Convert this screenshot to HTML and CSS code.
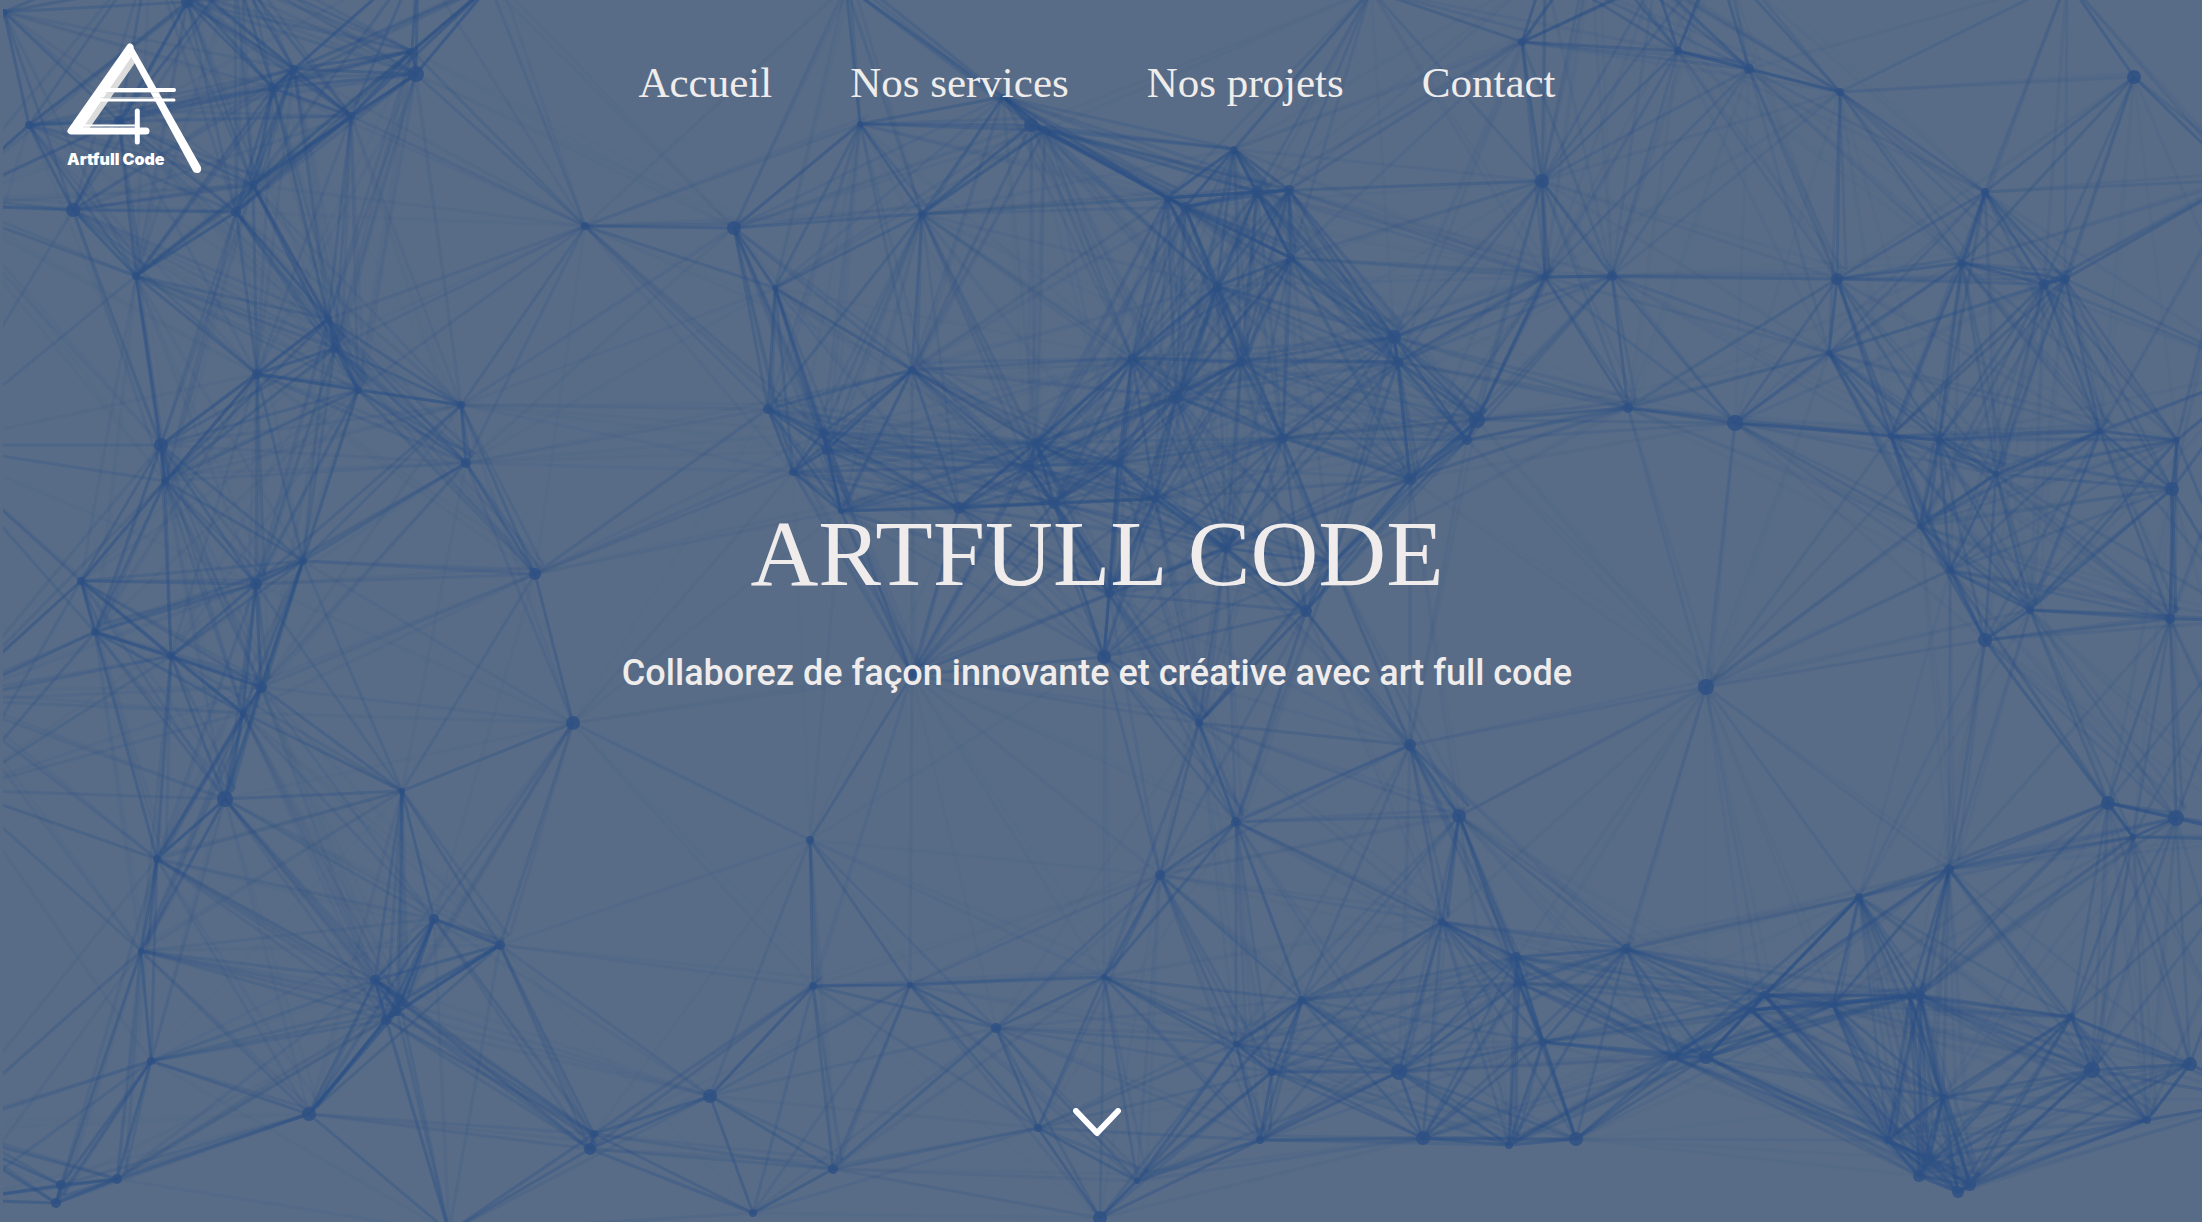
FILE: index.html
```html
<!DOCTYPE html>
<html lang="fr">
<head>
<meta charset="utf-8">
<meta name="viewport" content="width=device-width, initial-scale=1">
<title>Artfull Code</title>
<link rel="stylesheet" href="styles.css">
</head>
<body>
<div class="hero">
  <svg class="network" viewBox="0 0 2202 1222" preserveAspectRatio="xMidYMid slice" aria-hidden="true"></svg>
  <header class="header">
    <a class="logo" href="#" aria-label="Artfull Code">
      <svg class="logo-mark" viewBox="0 0 136 132">
        <path d="M65 9 L71 17 L23 86 L13 86 Z" fill="#dcdcdc"/>
        <path d="M64 4 L5 88 H80" fill="none" stroke="#fff" stroke-width="7" stroke-linecap="round" stroke-linejoin="round"/>
        <path d="M10 85 L61 9 L66 13 L16 86 Z" fill="#fff"/>
        <path d="M61 4 Q64 -1 67 4 L135 124 Q136 130 131 130 Q128 130 127 128 L61 6 Z" fill="#fff"/>
        <path d="M39 47 H108" stroke="#fff" stroke-width="4" stroke-linecap="round"/>
        <path d="M34 57 H108" stroke="#fff" stroke-width="3" stroke-linecap="round"/>
        <path d="M39 49.500 H94 M34 54.500 H96" stroke="#d6d9de" stroke-width="1" opacity=".5"/>
        <path d="M16 82.500 H70" stroke="#fff" stroke-width="2"/>
        <path d="M71.300 68 V99" stroke="#fff" stroke-width="5" stroke-linecap="round"/>
        <text class="logo-text" x="1" y="122">Artfull Code</text>
      </svg>
    </a>
    <nav class="nav" aria-label="Navigation principale">
      <a href="#accueil">Accueil</a>
      <a href="#services">Nos services</a>
      <a href="#projets">Nos projets</a>
      <a href="#contact">Contact</a>
    </nav>
  </header>
  <main class="intro">
    <h1 class="title">ARTFULL CODE</h1>
    <p class="tagline">Collaborez de façon innovante et créative avec art full code</p>
  </main>
  <div class="bottom">
    <a class="scroll" href="#services" aria-label="Défiler vers le bas">
      <svg class="chevron" viewBox="0 0 48 30"><path d="M3 3 L24 25 L45 3" fill="none" stroke="#fff" stroke-width="6" stroke-linecap="round" stroke-linejoin="round"/></svg>
    </a>
  </div>
</div>
<script src="network.js"></script>
</body>
</html>
```
FILE: styles.css
```css
* { box-sizing: border-box; }

body {
  margin: 0;
  background: #586c87;
  color: #efeceb;
  font-family: "Liberation Serif", serif;
}

a { color: inherit; text-decoration: none; }

.hero {
  position: relative;
  display: grid;
  grid-template-rows: 180px 1fr 180px;
  min-height: 100vh;
  padding-right: 8px;
  overflow: hidden;
}

.network {
  position: absolute;
  inset: 0;
  width: 100%;
  height: 100%;
  clip-path: inset(0 0 0 3px);
}

.network line { stroke: #2b5086; stroke-width: 3; }
.network circle { fill: #2f5184; fill-opacity: .85; }

.header, .intro, .bottom { position: relative; }

.header {
  display: grid;
  grid-template-columns: 1fr auto 1fr;
  align-items: start;
  padding: 43px 66px 0;
}

.logo { width: 136px; }
.logo-mark { display: block; width: 136px; height: 132px; overflow: visible; }
.logo-text { fill: #fff; font: 900 16px "Inter", sans-serif; }

.nav {
  display: flex;
  gap: 78px;
  padding-top: 16px;
  font-size: 43px;
  line-height: 48px;
}

.intro {
  display: flex;
  flex-direction: column;
  align-items: center;
  justify-content: center;
  gap: 44px;
  padding-bottom: 24px;
  text-align: center;
}

.title {
  margin: 0;
  font-size: 94px;
  font-weight: 400;
  line-height: 104px;
}

.tagline {
  margin: 0;
  font-family: "Roboto", sans-serif;
  font-size: 36px;
  font-weight: 500;
  line-height: 48px;
}

.bottom {
  display: flex;
  align-items: center;
  justify-content: center;
}

.scroll { padding-bottom: 18px; }
.chevron { display: block; width: 48px; height: 30px; }
```
FILE: network.js
```js
// Nodes of the background mesh: x, y, radius
const nodes = [
  [416,74,8],[412,51,3],[294,69,4],[273,88,5],[351,116,4],[187,2,6],[29,125,4],[119,121,5],
  [73,210,7],[253,185,4],[236,212,5],[136,276,4],[328,319,4],[335,348,5],[257,374,5],[358,390,4],
  [461,405,4],[466,463,5],[161,445,7],[165,481,4],[81,581,4],[256,584,6],[303,561,4],[535,574,6],
  [585,226,4],[734,228,7],[4,12,3],[235,-30,4],[418,-40,4],[490,-15,4],[150,-50,4],
  [860,124,3],[1003,97,3],[1031,125,7],[1045,130,4],[922,214,4],[1234,149,3],[1167,198,3],
  [1185,207,5],[1257,192,6],[1289,190,5],[1291,258,4],[1217,286,4],[1394,337,7],[1398,362,5],
  [1241,362,5],[1132,358,4],[1176,397,7],[1283,438,5],[1410,479,6],[1036,443,5],[1028,466,6],
  [1118,463,5],[1054,503,6],[1155,499,4],[912,370,4],[775,288,3],[768,409,5],[823,432,4],
  [827,450,5],[793,472,4],[841,511,3],[959,508,6],[1226,548,5],[1333,563,4],[1109,594,4],
  [1306,611,6],[846,-14,4],[1371,-10,4],
  [1477,420,8],[1467,440,5],[1522,42,4],[1678,51,4],[1749,69,5],[1840,92,4],[2134,77,7],
  [1542,181,7],[1545,277,3],[1612,276,5],[1837,279,6],[1985,192,4],[1962,263,4],[2044,284,5],
  [2065,279,5],[1829,353,3],[1628,408,5],[1735,423,8],[1891,436,3],[1939,440,4],[2100,431,3],
  [2177,440,3],[1996,474,3],[2172,489,7],[1920,526,3],[1950,570,4],[2030,610,4],
  [1545,-30,4],[1590,-55,4],[1655,-20,4],[1715,-45,4],[2067,-20,4],[2240,180,4],[2260,370,4],
  [95,632,4],[171,656,4],[261,687,6],[243,713,3],[225,799,8],[402,791,3],[157,859,4],
  [573,723,7],[141,951,3],[434,919,5],[500,945,5],[375,980,5],[400,1002,5],[386,1020,5],
  [397,1012,4],[151,1061,4],[309,1114,7],[594,1134,4],[590,1149,6],[710,1096,7],[117,1179,5],
  [61,1185,5],[56,1203,5],[449,1232,4],[-60,205,4],[-70,445,4],[-50,700,4],[-40,790,4],[-60,1130,4],[-40,1200,4],
  [912,675,5],[1104,657,7],[1199,723,4],[1410,745,6],[1236,822,5],[1160,875,5],[1459,816,7],
  [810,840,4],[813,986,4],[910,985,3],[1104,977,3],[996,1028,5],[1442,922,4],[1302,1000,4],
  [1236,1044,3],[1272,1072,4],[1399,1072,8],[1423,1138,7],[1260,1140,4],[1038,1128,4],
  [833,1169,5],[753,1213,4],[1137,1181,3],[1100,1218,7],
  [1706,687,8],[1985,640,7],[2170,619,5],[2108,803,7],[2176,818,8],[2133,837,3],[1949,869,5],
  [1859,897,4],[1626,949,5],[1516,957,5],[1519,983,4],[1543,1042,4],[1672,1057,4],[1706,1057,7],
  [1764,995,4],[1751,1010,4],[1833,1005,3],[1910,996,4],[1920,995,5],[2071,1017,4],[2092,1070,8],
  [2190,1064,7],[2147,1120,4],[1943,1097,3],[1888,1140,4],[1929,1159,6],[1919,1176,6],
  [1958,1192,6],[1970,1185,6],[1576,1139,7],[1509,1145,4],[2250,620,4],[2270,840,4],[2260,1100,4]
];

const svg = document.querySelector(".network");
const reach = 370;

function add(name, attributes) {
  const element = document.createElementNS("http://www.w3.org/2000/svg", name);
  for (const key in attributes) element.setAttribute(key, attributes[key]);
  svg.appendChild(element);
}

// Links fade out with the distance between their two nodes
nodes.forEach(([ax, ay], i) => {
  nodes.slice(i + 1).forEach(([bx, by], j) => {
    const distance = Math.hypot(ax - bx, ay - by);
    if (distance > reach) return;
    const strength = 1 - distance / reach;
    const opacity = (0.03 + 0.58 * strength).toFixed(2);
    add("line", { x1: ax, y1: ay, x2: bx, y2: by, "stroke-opacity": opacity });
    // Every second link has a fainter strand beside it
    if ((i + j) % 2 === 0) {
      const shift = 4 + (i * 7 + j * 3) % 7;
      add("line", {
        x1: ax, y1: ay, x2: bx + shift, y2: by - shift,
        "stroke-opacity": (opacity * 0.55).toFixed(2)
      });
    }
  });
});

nodes.forEach(([cx, cy, r]) => add("circle", { cx, cy, r }));
```
